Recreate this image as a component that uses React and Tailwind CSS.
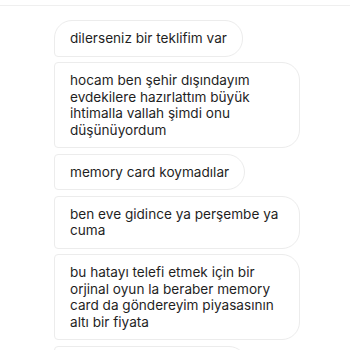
const messages = [
  { lines: ['dilerseniz bir teklifim var'], first: true },
  { lines: ['hocam ben şehir dışındayım', 'evdekilere hazırlattım büyük', 'ihtimalla vallah şimdi onu', 'düşünüyordum'] },
  { lines: ['memory card koymadılar'] },
  { lines: ['ben eve gidince ya perşembe ya', 'cuma'] },
  { lines: ['bu hatayı telefi etmek için bir', 'orjinal oyun la beraber memory', 'card da göndereyim piyasasının', 'altı bir fiyata'] },
];

const Bubble = ({ lines, first }) => {
  const wide = lines.length > 1;
  return (
    <div
      className={
        'border border-[#ececec] bg-white px-[15px] py-[9px] text-[13.6px] leading-[16.5px] text-[#1f1f1f] rounded-r-[18px] ' +
        (first ? 'rounded-tl-[18px] rounded-bl-[4px] ' : 'rounded-l-[4px] ') +
        (wide ? 'w-[246px]' : 'w-fit')
      }
    >
      {lines.map((l, i) => (
        <div key={i} className="whitespace-nowrap">{l}</div>
      ))}
    </div>
  );
};

export default function App() {
  return (
    <div className="h-[350px] w-[350px] overflow-hidden bg-white font-['Inter',sans-serif]">
      <div className="h-[5px]" />
      <div className="h-px bg-[#efefef]" />
      <div className="flex flex-col items-start gap-[5.5px] pl-[54px] pt-[14px]">
        {messages.map((m, i) => (
          <Bubble key={i} lines={m.lines} first={m.first} />
        ))}
        {/* next message, only its top edge is in view */}
        <div className="h-[37px] w-[193px] shrink-0 rounded-l-[4px] rounded-r-[18px] border border-[#ececec] bg-white" />
      </div>
    </div>
  );
}
